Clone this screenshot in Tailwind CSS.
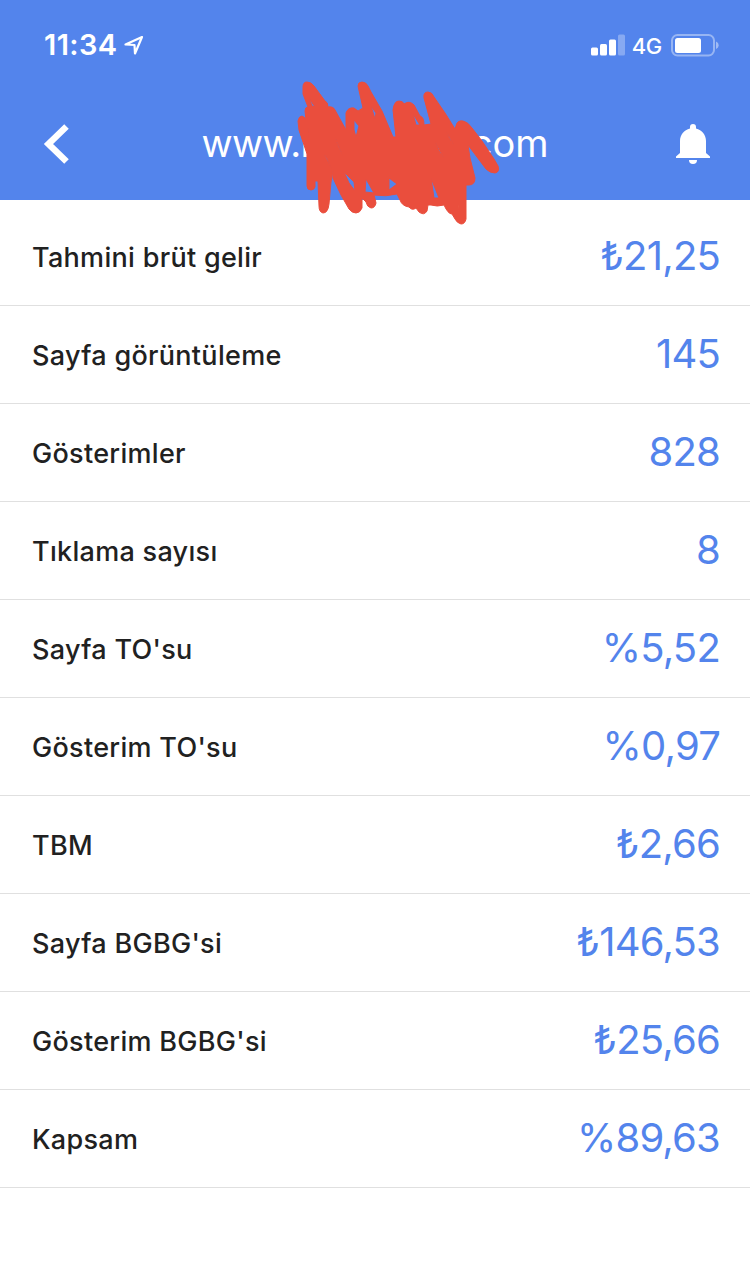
<!DOCTYPE html>
<html lang="tr">
<head>
  <meta charset="UTF-8" />
  <meta name="viewport" content="width=device-width, initial-scale=1.0"/>
  <title>Site raporu</title>
  <script src="https://cdn.jsdelivr.net/npm/@tailwindcss/browser@4"></script>
</head>
<body class="bg-white text-[#212121] font-['Inter',sans-serif]">

  <!-- Header -->
  <header class="relative h-[200px] bg-[#5384ec] text-white">

    <!-- Status bar -->
    <div class="flex h-[90px] items-center justify-between pl-[44px] pr-[31px]">
      <div class="flex items-center gap-[6px]">
        <span class="text-[29px] font-semibold tracking-[0.4px]">11:34</span>
        <svg class="h-5 w-5" viewBox="0 0 20 20" fill="none" stroke="currentColor" stroke-width="2.200" stroke-linejoin="round">
          <path d="M18 2 L1.500 9.500 L10.500 10 L11 18.500 Z"/>
        </svg>
      </div>
      <div class="flex items-center">
        <svg class="h-[22px] w-[34px]" viewBox="0 0 34 22" fill="currentColor">
          <rect x="0" y="13.500" width="7" height="8" rx="1.500"/>
          <rect x="9" y="10" width="7" height="11.500" rx="1.500"/>
          <rect x="18" y="5.500" width="7" height="16" rx="1.500"/>
          <rect x="27" y="0.500" width="7" height="21" rx="1.500" opacity="0.3"/>
        </svg>
        <span class="ml-[7px] pt-0.5 text-[22px] font-medium tracking-[-0.3px]">4G</span>
        <svg class="ml-[9px] h-6 w-12" viewBox="0 0 48 24">
          <rect x="1" y="2" width="42" height="20.500" rx="5.500" fill="none" stroke="white" stroke-width="2" opacity="0.4"/>
          <rect x="4" y="5" width="26" height="15" rx="2.500" fill="white"/>
          <path d="M45 8.500 C48.500 10 48.500 14.500 45 16 Z" fill="white" opacity="0.45"/>
        </svg>
      </div>
    </div>

    <!-- Title bar -->
    <div class="flex h-[108px] items-center justify-between pl-[43px] pr-[39px]">
      <svg class="h-10 w-7" viewBox="0 0 28 40" fill="none" stroke="currentColor" stroke-width="6.500">
        <path d="M23.500 2.500 L5.500 20 L23.500 37.500"/>
      </svg>
      <h1 class="ml-1 flex w-[347px] justify-between pb-0.5 text-[38px] leading-none"><span class="tracking-[-0.6px]">www.n</span><span>com</span></h1>
      <svg class="h-10 w-[36px]" viewBox="0 0 36 40" fill="currentColor">
        <path d="M15 4.500 V3 A3 3 0 0 1 21 3 V4.500 C27 6 31 11 31 17 V29 L35 32.500 V34 H1 V32.500 L5 29 V17 C5 11 9 6 15 4.500 Z"/>
        <path d="M14 36 H22 A4 4 0 0 1 14 36 Z"/>
      </svg>
    </div>

    <!-- Scribble over the domain name -->
    <svg class="absolute left-[290px] top-[75px] h-[155px] w-[215px]" viewBox="290 75 215 155" fill="#ea4e3d" fill-rule="evenodd" stroke="#ea4e3d" stroke-width="1" stroke-linejoin="round">
      <path d="M303 87 Q303 82 307 82 Q311 82 314 86 L325 101 Q328 102 328 107 Q333 106 335 110 L346 130 L346 113 Q348 107 354 108 L358 111 L363 108 L358 86 Q358 82 362 82 Q366 82 368 86 L371 92 L382 111 L393 137 L396 137 L393 110 Q394 101 399 101 Q403 101 404 104 Q409 100 414 105 L420 116 Q424 117 424 125 L431 124 L424 98 Q423 92 428 92 Q432 92 434 97 L445 113 L455 129 L456 126 Q457 120 463 121 Q468 122 472 128 L482 141 L494 159 L498 166 Q500 172 495 173 Q490 173 486 169 L477 157 L468 145 L470 158 L475 178 Q475 185 469 185 L466 185 L466 219 Q465 224 461 224 Q457 223 455 219 L452 214 Q448 214 444 205 Q437 207 431 205 L428 205 L427 211 Q424 216 419 212 L416 208 Q412 211 409 207 Q402 206 400 200 L397 194 Q386 197 374 195 L376 203 Q375 208 371 208 Q367 207 366 202 L362 198 L362 208 Q360 213 356 213 Q352 213 349 209 L341 195 L333 178 L333 171 L331 182 L329 204 Q328 213 323 213 Q319 212 319 206 L318 181 L315 181 L315 187 Q314 190 311 190 Q307 190 307 186 L307 154 L299 130 L298 121 Q299 116 302 116 Q305 117 306 120 L305 111 Q305 107 308 107 L303 94 Z
        M308 128 L309 139 L308 131 Z
        M309 98 L315 107 L312 106 Z
        M324 154 L327 158 L332 169 L327 160 Z
        M335 137 L343 156 L338 146 Z
        M354 120 L359 126 L356 137 L354 130 Z
        M344 172 L354 182 L355 191 L349 183 Z
        M366 179 L374 193 L365 192 Z
        M371 106 L376 113 L375 119 Z
        M389 178 L397 184 L389 190 Z
        M413 114 L420 125 L416 125 Z
        M431 178 L439 198 L434 198 Z
        M446 131 L454 145 L449 138 Z
        M435 141 L444 158 L439 151 Z
        M458 205 L459 211 L458 208 Z"/>
    </svg>
  </header>

  <!-- Metrics -->
  <main id="metrics" class="pt-2"></main>

  <script>
    const metrics = [
      ["Tahmini brüt gelir", "₺21,25"],
      ["Sayfa görüntüleme", "145"],
      ["Gösterimler", "828"],
      ["Tıklama sayısı", "8"],
      ["Sayfa TO'su", "%5,52"],
      ["Gösterim TO'su", "%0,97"],
      ["TBM", "₺2,66"],
      ["Sayfa BGBG'si", "₺146,53"],
      ["Gösterim BGBG'si", "₺25,66"],
      ["Kapsam", "%89,63"],
    ];

    document.getElementById('metrics').innerHTML = metrics.map(([label, value]) => `
      <div class="flex h-[98px] items-center justify-between border-b border-[#e0e0e0] pl-8 pr-[30px]">
        <span class="pt-1 text-[27px] font-medium tracking-[0.3px]">${label}</span>
        <span class="pb-px text-[40px] tracking-[-0.8px] text-[#5384ec]">${value}</span>
      </div>`).join('');
  </script>
</body>
</html>
